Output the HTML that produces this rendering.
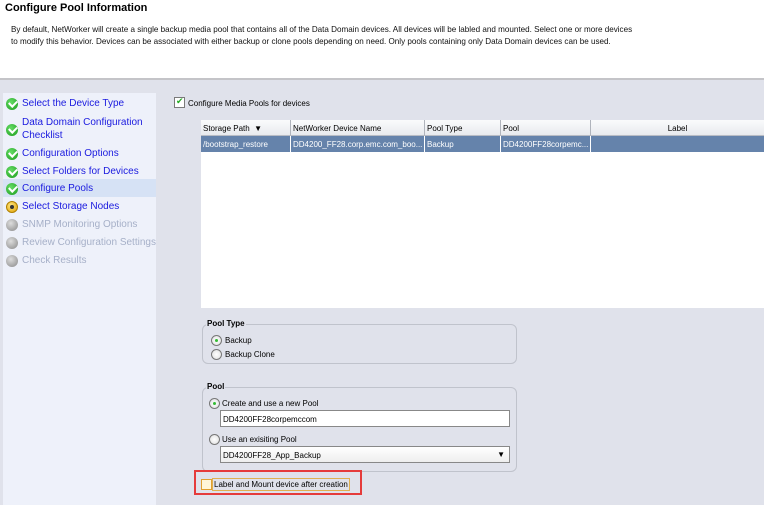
<!DOCTYPE html>
<html><head><style>
*{margin:0;padding:0;box-sizing:border-box}
body{width:764px;height:505px;overflow:hidden;background:#e0e2eb;font-family:"Liberation Sans",Arial,sans-serif;font-size:11px;color:#000;position:relative}
.abs{position:absolute}
#hdr{left:0;top:0;width:764px;height:80px;background:#fff;border-bottom:2px solid #c4c4c8}
h1{position:absolute;left:5px;top:2px;font-size:11px;font-weight:bold}
.desc{position:absolute;left:11px;top:24px;font-size:8.1px;line-height:12px;color:#111;white-space:nowrap}
#nav{left:3px;top:93px;width:153px;height:412px;background:#eef1fa}
.it{position:absolute;left:0;width:153px;height:18px;font-size:10px;color:#1a1adf;white-space:nowrap}
.it span{position:absolute;left:19px;top:4px}
.ic{position:absolute;left:3px;top:4px;width:12px;height:12px;border-radius:50%}
.g{background:radial-gradient(circle at 40% 35%,#6d6,#1a9a1a)}
.g::after{content:"";position:absolute;left:3px;top:2px;width:6px;height:4px;border-left:2px solid #fff;border-bottom:2px solid #fff;transform:rotate(-45deg)}
.y{background:radial-gradient(circle at 40% 35%,#ffe680,#e0a000);border:1px solid #b08000}
.y::after{content:"";position:absolute;left:3px;top:3px;width:4px;height:4px;background:#333;border-radius:50%}
.gr{background:radial-gradient(circle at 40% 35%,#ddd,#888)}
.dis{color:#a6b0c8}
.cb{position:absolute;width:11px;height:11px;border:1px solid #7a7a7a;background:#fff}
#tbl{left:201px;top:120px;width:563px;height:188px;background:#fff}
.th{position:absolute;top:0;height:16px;background:linear-gradient(#fafbfc,#e8eaee);border-right:1px solid #b0b4bc;border-bottom:1px solid #b8bcc4;font-size:8px;padding:4px 2px;white-space:nowrap}
.td{position:absolute;top:16px;height:16px;background:#6583ab;border-right:1px solid #fff;color:#fff;font-size:8px;padding:4px 2px;white-space:nowrap;overflow:hidden}
fieldset{position:absolute;border:1px solid #c0c3cc;border-radius:6px}
.lg{position:absolute;font-size:8px;font-weight:bold;background:#e0e2eb;padding:0 1px}
.rd{position:absolute;width:11px;height:11px;border-radius:50%;border:1px solid #777;background:radial-gradient(#fff,#ddd)}
.rd.on::after{content:"";position:absolute;left:3px;top:3px;width:3px;height:3px;border-radius:50%;background:#3b3}
.t9{position:absolute;font-size:8px;white-space:nowrap}
.inp{position:absolute;background:#fff;border:1px solid #888;font-size:8px;padding:4px 2px}
</style></head><body>
<div id="hdr" class="abs">
<h1>Configure Pool Information</h1>
<div class="desc">By default, NetWorker will create a single backup media pool that contains all of the Data Domain devices. All devices will be labled and mounted. Select one or more devices<br>to modify this behavior. Devices can be associated with either backup or clone pools depending on need. Only pools containing only Data Domain devices can be used.</div>
</div>
<div id="nav" class="abs">
<div class="it" style="top:1px"><i class="ic g"></i><span>Select the Device Type</span></div>
<div class="it" style="top:19px;height:30px"><i class="ic g" style="top:12px"></i><span style="line-height:13px">Data Domain Configuration<br>Checklist</span></div>
<div class="it" style="top:51px"><i class="ic g"></i><span>Configuration Options</span></div>
<div class="it" style="top:69px"><i class="ic g"></i><span>Select Folders for Devices</span></div>
<div class="it" style="top:86px;background:#d6e2f5"><i class="ic g"></i><span>Configure Pools</span></div>
<div class="it" style="top:104px"><i class="ic y"></i><span>Select Storage Nodes</span></div>
<div class="it dis" style="top:122px"><i class="ic gr"></i><span>SNMP Monitoring Options</span></div>
<div class="it dis" style="top:140px"><i class="ic gr"></i><span>Review Configuration Settings</span></div>
<div class="it dis" style="top:158px"><i class="ic gr"></i><span>Check Results</span></div>
</div>
<div class="cb" style="left:174px;top:97px"><span style="position:absolute;left:1px;top:-2px;color:#2a2;font-size:9px">✔</span></div>
<div class="t9" style="left:188px;top:99px">Configure Media Pools for devices</div>
<div id="tbl" class="abs">
<div class="th" style="left:0;width:90px">Storage Path &nbsp;▼</div>
<div class="th" style="left:90px;width:134px">NetWorker Device Name</div>
<div class="th" style="left:224px;width:76px">Pool Type</div>
<div class="th" style="left:300px;width:90px">Pool</div>
<div class="th" style="left:390px;width:173px;text-align:center;border-right:0">Label</div>
<div class="td" style="left:0;width:90px">/bootstrap_restore</div>
<div class="td" style="left:90px;width:134px">DD4200_FF28.corp.emc.com_boo...</div>
<div class="td" style="left:224px;width:76px">Backup</div>
<div class="td" style="left:300px;width:90px">DD4200FF28corpemc...</div>
<div class="td" style="left:390px;width:173px;border-right:0"></div>
</div>
<fieldset style="left:202px;top:324px;width:315px;height:40px"></fieldset>
<div class="lg" style="left:206px;top:319px">Pool Type</div>
<div class="rd on" style="left:211px;top:335px"></div><div class="t9" style="left:225px;top:336px">Backup</div>
<div class="rd" style="left:211px;top:349px"></div><div class="t9" style="left:225px;top:350px">Backup Clone</div>
<fieldset style="left:202px;top:387px;width:315px;height:85px"></fieldset>
<div class="lg" style="left:206px;top:382px">Pool</div>
<div class="rd on" style="left:209px;top:398px"></div><div class="t9" style="left:222px;top:399px">Create and use a new Pool</div>
<div class="inp" style="left:220px;top:410px;width:290px;height:17px">DD4200FF28corpemccom</div>
<div class="rd" style="left:209px;top:434px"></div><div class="t9" style="left:222px;top:435px">Use an exisiting Pool</div>
<div class="inp" style="left:220px;top:446px;width:290px;height:17px;background:linear-gradient(#fff,#eee)">DD4200FF28_App_Backup<span style="position:absolute;right:4px;top:3px;font-size:8px">▼</span></div>
<div class="abs" style="left:194px;top:470px;width:168px;height:25px;border:2px solid #e53b3b"></div>
<div class="cb" style="left:201px;top:479px;border-color:#e0a030;background:#fff6d8"></div>
<div class="t9" style="left:212px;top:478px;border:1px solid #e0b050;padding:1px 1px">Label and Mount device after creation</div>
</body></html>
